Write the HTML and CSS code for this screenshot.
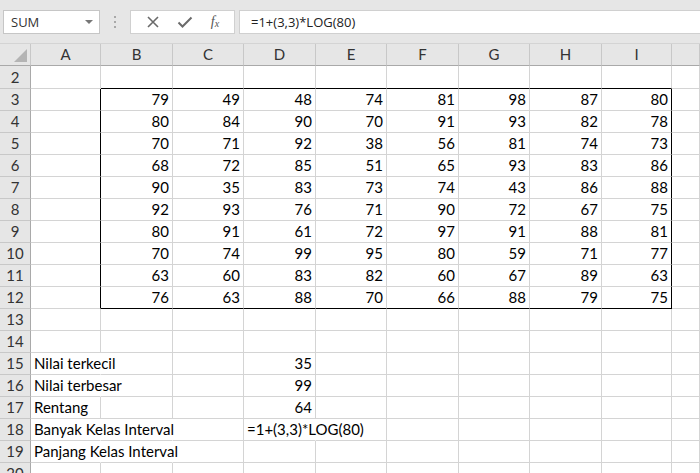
FILE: index.html
```html
<!DOCTYPE html>
<html>
<head>
<meta charset="utf-8">
<link rel="stylesheet" href="styles.css">
</head>
<body>
<div class="app">
  <div class="fbar">
    <div class="namebox"><span>SUM</span><span class="caret"></span></div>
    <div class="dots"><i></i><i></i><i></i></div>
    <div class="btns">
      <svg class="ico" width="14" height="14" viewBox="0 0 14 14"><path d="M2 2 L12 12 M12 2 L2 12" stroke="#6a6a6a" stroke-width="1.6" fill="none"/></svg>
      <svg class="ico" width="16" height="14" viewBox="0 0 16 14"><path d="M1.5 7.5 L5.5 11.5 L14.5 2.5" stroke="#6a6a6a" stroke-width="2" fill="none"/></svg>
      <span class="fx">f<sub>x</sub></span>
    </div>
    <div class="finput">=1+(3,3)*LOG(80)</div>
  </div>
  <div class="sheet">
    <div class="row hdr">
      <div class="c corner"><span class="tri"></span></div>
      <div class="c">A</div><div class="c">B</div><div class="c">C</div><div class="c">D</div><div class="c">E</div><div class="c">F</div><div class="c">G</div><div class="c">H</div><div class="c">I</div><div class="c"></div>
    </div>
    <div class="row top">
      <div class="c rh">2</div><div class="c"></div><div class="c"></div><div class="c"></div><div class="c"></div><div class="c"></div><div class="c"></div><div class="c"></div><div class="c"></div><div class="c"></div><div class="c"></div>
    </div>
    <div class="row box">
      <div class="c rh">3</div><div class="c"></div><div class="c n">79</div><div class="c n">49</div><div class="c n">48</div><div class="c n">74</div><div class="c n">81</div><div class="c n">98</div><div class="c n">87</div><div class="c n">80</div><div class="c"></div>
    </div>
    <div class="row box">
      <div class="c rh">4</div><div class="c"></div><div class="c n">80</div><div class="c n">84</div><div class="c n">90</div><div class="c n">70</div><div class="c n">91</div><div class="c n">93</div><div class="c n">82</div><div class="c n">78</div><div class="c"></div>
    </div>
    <div class="row box">
      <div class="c rh">5</div><div class="c"></div><div class="c n">70</div><div class="c n">71</div><div class="c n">92</div><div class="c n">38</div><div class="c n">56</div><div class="c n">81</div><div class="c n">74</div><div class="c n">73</div><div class="c"></div>
    </div>
    <div class="row box">
      <div class="c rh">6</div><div class="c"></div><div class="c n">68</div><div class="c n">72</div><div class="c n">85</div><div class="c n">51</div><div class="c n">65</div><div class="c n">93</div><div class="c n">83</div><div class="c n">86</div><div class="c"></div>
    </div>
    <div class="row box">
      <div class="c rh">7</div><div class="c"></div><div class="c n">90</div><div class="c n">35</div><div class="c n">83</div><div class="c n">73</div><div class="c n">74</div><div class="c n">43</div><div class="c n">86</div><div class="c n">88</div><div class="c"></div>
    </div>
    <div class="row box">
      <div class="c rh">8</div><div class="c"></div><div class="c n">92</div><div class="c n">93</div><div class="c n">76</div><div class="c n">71</div><div class="c n">90</div><div class="c n">72</div><div class="c n">67</div><div class="c n">75</div><div class="c"></div>
    </div>
    <div class="row box">
      <div class="c rh">9</div><div class="c"></div><div class="c n">80</div><div class="c n">91</div><div class="c n">61</div><div class="c n">72</div><div class="c n">97</div><div class="c n">91</div><div class="c n">88</div><div class="c n">81</div><div class="c"></div>
    </div>
    <div class="row box">
      <div class="c rh">10</div><div class="c"></div><div class="c n">70</div><div class="c n">74</div><div class="c n">99</div><div class="c n">95</div><div class="c n">80</div><div class="c n">59</div><div class="c n">71</div><div class="c n">77</div><div class="c"></div>
    </div>
    <div class="row box">
      <div class="c rh">11</div><div class="c"></div><div class="c n">63</div><div class="c n">60</div><div class="c n">83</div><div class="c n">82</div><div class="c n">60</div><div class="c n">67</div><div class="c n">89</div><div class="c n">63</div><div class="c"></div>
    </div>
    <div class="row box last">
      <div class="c rh">12</div><div class="c"></div><div class="c n">76</div><div class="c n">63</div><div class="c n">88</div><div class="c n">70</div><div class="c n">66</div><div class="c n">88</div><div class="c n">79</div><div class="c n">75</div><div class="c"></div>
    </div>
    <div class="row">
      <div class="c rh">13</div><div class="c"></div><div class="c"></div><div class="c"></div><div class="c"></div><div class="c"></div><div class="c"></div><div class="c"></div><div class="c"></div><div class="c"></div><div class="c"></div>
    </div>
    <div class="row">
      <div class="c rh">14</div><div class="c"></div><div class="c"></div><div class="c"></div><div class="c"></div><div class="c"></div><div class="c"></div><div class="c"></div><div class="c"></div><div class="c"></div><div class="c"></div>
    </div>
    <div class="row">
      <div class="c rh">15</div><div class="c t ov">Nilai terkecil</div><div class="c"></div><div class="c"></div><div class="c n">35</div><div class="c"></div><div class="c"></div><div class="c"></div><div class="c"></div><div class="c"></div><div class="c"></div>
    </div>
    <div class="row">
      <div class="c rh">16</div><div class="c t ov">Nilai terbesar</div><div class="c"></div><div class="c"></div><div class="c n">99</div><div class="c"></div><div class="c"></div><div class="c"></div><div class="c"></div><div class="c"></div><div class="c"></div>
    </div>
    <div class="row">
      <div class="c rh">17</div><div class="c t">Rentang</div><div class="c"></div><div class="c"></div><div class="c n">64</div><div class="c"></div><div class="c"></div><div class="c"></div><div class="c"></div><div class="c"></div><div class="c"></div>
    </div>
    <div class="row">
      <div class="c rh">18</div><div class="c t ov">Banyak Kelas Interval</div><div class="c ov"></div><div class="c"></div><div class="c t ov">=1+(3,3)*LOG(80)</div><div class="c"></div><div class="c"></div><div class="c"></div><div class="c"></div><div class="c"></div><div class="c"></div>
    </div>
    <div class="row">
      <div class="c rh">19</div><div class="c t ov">Panjang Kelas Interval</div><div class="c ov"></div><div class="c"></div><div class="c"></div><div class="c"></div><div class="c"></div><div class="c"></div><div class="c"></div><div class="c"></div><div class="c"></div>
    </div>
    <div class="row">
      <div class="c rh">20</div><div class="c"></div><div class="c"></div><div class="c"></div><div class="c"></div><div class="c"></div><div class="c"></div><div class="c"></div><div class="c"></div><div class="c"></div><div class="c"></div>
    </div>
  </div>
</div>
</body>
</html>
```
FILE: styles.css
```css
* { box-sizing: border-box; }
html, body { margin: 0; padding: 0; }
body { width: 700px; height: 473px; overflow: hidden; background: #fff; font-family: Lato, "Liberation Sans", sans-serif; }
.app { width: 700px; height: 473px; overflow: hidden; }

.fbar {
  height: 44px;
  background: #e6e6e6;
  display: flex;
  align-items: flex-start;
  padding-top: 10px;
  padding-left: 3px;
  border-bottom: 1px solid #d4d4d4;
}
.namebox {
  width: 97px; height: 24px;
  background: #fff;
  border: 1px solid #c6c6c6;
  display: flex; align-items: center; justify-content: space-between;
  padding: 0 6px 0 7px;
  font-family: "Open Sans", "Liberation Sans", sans-serif;
  font-size: 13px; color: #333;
}
.caret { width: 0; height: 0; border-left: 4px solid transparent; border-right: 4px solid transparent; border-top: 4px solid #777; }
.dots { width: 30px; height: 24px; display: flex; flex-direction: column; align-items: center; justify-content: center; gap: 3px; }
.dots i { display: block; width: 2px; height: 2px; background: #a8a8a8; }
.btns {
  width: 105px; height: 24px;
  background: #fff;
  border: 1px solid #d0d0d0;
  display: flex; align-items: center; justify-content: space-around;
  padding: 0 6px;
}
.fx { font-family: "Liberation Serif", serif; font-style: italic; font-size: 14px; color: #555; line-height: 1; }
.fx sub { font-size: 10px; vertical-align: -1px; }
.finput {
  flex: 1; margin-left: 4px; height: 24px;
  background: #fff;
  border: 1px solid #d0d0d0; border-right: none;
  padding-left: 11px;
  display: flex; align-items: center;
  font-family: "Open Sans", "Liberation Sans", sans-serif;
  font-size: 13px; color: #222;
}

.row {
  display: grid;
  grid-template-columns: 31px 70px 72px 71px 72px 71px 72px 71px 72px 70px 28px;
  height: 22px;
}
.row.top { height: 23px; }
.c {
  border-right: 1px solid #d4d4d4;
  border-bottom: 1px solid #d4d4d4;
  font-size: 15px;
  color: #000;
  line-height: 21px;
  white-space: nowrap;
}
.hdr { background: #e6e6e6; }
.hdr .c { border-right-color: #c8c8c8; border-bottom-color: #a9a9a9; text-align: center; color: #333; position: relative; }
.corner { overflow: hidden; }
.tri { position: absolute; right: 3px; bottom: 3px; width: 0; height: 0; border-left: 13px solid transparent; border-bottom: 13px solid #b4b4b4; }
.rh { background: #e6e6e6; text-align: center; color: #333; border-right-color: #a9a9a9; border-bottom-color: #c8c8c8; }
.top .rh { line-height: 22px; }
.n { text-align: right; padding-right: 3px; }
.t { padding-left: 3px; }
.ov { border-right-color: transparent; }
.top .c:nth-child(n+3):nth-child(-n+10) { border-bottom-color: #000; }
.box .c:nth-child(2) { border-right-color: #000; }
.box .c:nth-child(10) { border-right-color: #000; }
.last .c:nth-child(n+3):nth-child(-n+10) { border-bottom-color: #000; }
```
